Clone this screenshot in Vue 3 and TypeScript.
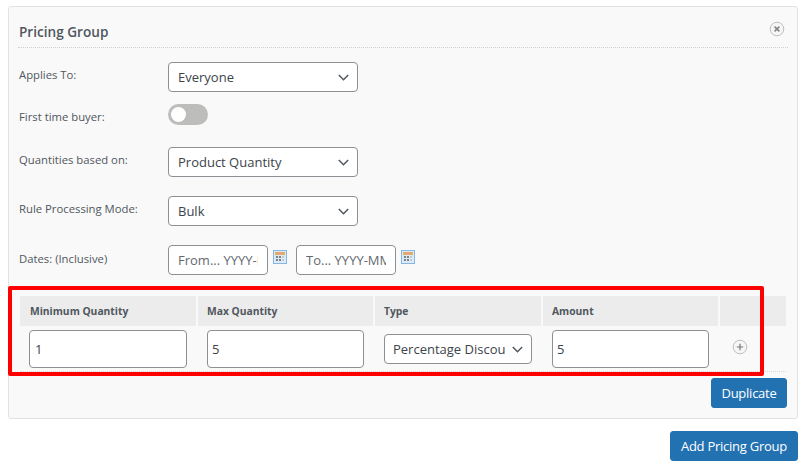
<script setup lang="ts">
const columns = ['Minimum Quantity', 'Max Quantity', 'Type', 'Amount', '']
</script>

<template>
  <div class="page">
    <section class="panel">
      <header class="panel-head">
        <h2>Pricing Group</h2>
        <svg class="round-icon" width="16" height="16" viewBox="0 0 16 16">
          <circle cx="8" cy="8" r="6.8" fill="#f6f6f6" stroke="#bdbdbd" />
          <path d="M5.6 5.6l4.8 4.8M10.4 5.6l-4.8 4.8" stroke="#858585" stroke-width="1.6" fill="none" />
        </svg>
      </header>

      <div class="row r-applies">
        <label>Applies To:</label>
        <select class="field"><option>Everyone</option></select>
      </div>
      <div class="row r-first">
        <label>First time buyer:</label>
        <span class="toggle"><i></i></span>
      </div>
      <div class="row r-qty">
        <label>Quantities based on:</label>
        <select class="field"><option>Product Quantity</option></select>
      </div>
      <div class="row r-mode">
        <label>Rule Processing Mode:</label>
        <select class="field"><option>Bulk</option></select>
      </div>
      <div class="row r-dates">
        <label>Dates: (Inclusive)</label>
        <input class="date" placeholder="From... YYYY-MM-DD" />
        <svg class="cal" width="14" height="14" viewBox="0 0 14 14">
          <rect x=".5" y=".5" width="13" height="13" fill="#dcebf8" stroke="#86b8e4" />
          <rect x="2" y="2" width="10" height="3" fill="#e6ab6c" />
          <path d="M3 6h2v2H3zM6 6h2v2H6zM3 9h2v2H3zM6 9h2v2H6z" fill="#808080" />
          <path d="M9 6h2v2H9zM9 9h2v2H9z" fill="#c3ccd4" />
        </svg>
        <input class="date second" placeholder="To... YYYY-MM-DD" />
        <svg class="cal" width="14" height="14" viewBox="0 0 14 14">
          <rect x=".5" y=".5" width="13" height="13" fill="#dcebf8" stroke="#86b8e4" />
          <rect x="2" y="2" width="10" height="3" fill="#e6ab6c" />
          <path d="M3 6h2v2H3zM6 6h2v2H6zM3 9h2v2H3zM6 9h2v2H6z" fill="#808080" />
          <path d="M9 6h2v2H9zM9 9h2v2H9z" fill="#c3ccd4" />
        </svg>
      </div>

      <div class="rules">
        <div class="heads">
          <div v-for="c in columns" :key="c" class="head">{{ c }}</div>
        </div>
        <div class="cells">
          <div class="cell"><input class="num" value="1" /></div>
          <div class="cell"><input class="num" value="5" /></div>
          <div class="cell"><select class="type"><option>Percentage Discount</option></select></div>
          <div class="cell"><input class="num" value="5" /></div>
          <div class="cell add">
            <svg class="round-icon" width="16" height="16" viewBox="0 0 16 16">
              <circle cx="8" cy="8" r="6.8" fill="#f6f6f6" stroke="#bdbdbd" />
              <path d="M4.8 8h6.4M8 4.8v6.4" stroke="#777" stroke-width="1.2" fill="none" />
            </svg>
          </div>
        </div>
        <div class="highlight"></div>
      </div>

      <div class="panel-foot"><button class="btn dup">Duplicate</button></div>
    </section>
    <div class="page-foot"><button class="btn add-group">Add Pricing Group</button></div>
  </div>
</template>

<style scoped>
.page {
  box-sizing: border-box;
  width: 801px;
  height: 464px;
  padding: 6px 3px 0 8px;
  overflow: hidden;
  font-family: "Open Sans", sans-serif;
  color: #50575e;
}
.panel {
  box-sizing: border-box;
  height: 413px;
  border: 1px solid #e2e2e2;
  border-radius: 3px;
  background: #f9f9f9;
  padding: 0 9px 0 9px;
}
.panel-head {
  height: 40px;
  display: flex;
  align-items: flex-start;
  justify-content: space-between;
  border-bottom: 1px dotted #d0d0d0;
}
h2 {
  margin: 15px 0 0 1px;
  font-size: 13.6px;
  line-height: 20px;
  font-weight: 600;
  color: #50575e;
}
.panel-head .round-icon { margin: 14px 3px 0 0; }
.row {
  display: flex;
  align-items: flex-start;
}
.row label {
  width: 149px;
  margin-left: 1px;
  font-size: 11.3px;
  line-height: 16px;
  color: #50575e;
}
.r-applies { margin-top: 14px; }
.r-applies label { margin-top: 5px; }
.r-first { margin-top: 12px; }
.r-first label { margin-top: 5px; }
.r-qty { margin-top: 22px; }
.r-qty label { margin-top: 5px; }
.r-mode { margin-top: 19px; }
.r-mode label { margin-top: 5px; }
.r-dates { margin-top: 19px; }
.r-dates label { margin-top: 6px; }
.field, .type {
  appearance: none;
  box-sizing: border-box;
  height: 30px;
  margin: 0;
  border: 1px solid #8c8f94;
  border-radius: 4px;
  background-color: #fff;
  background-image: url("data:image/svg+xml,%3Csvg xmlns='http://www.w3.org/2000/svg' width='11' height='7' viewBox='0 0 11 7'%3E%3Cpath d='M.8 1l4.7 4.7L10.2 1' fill='none' stroke='%2350575e' stroke-width='1.5'/%3E%3C/svg%3E");
  background-repeat: no-repeat;
  font-family: inherit;
  font-size: 13px;
  color: #3c434a;
}
.field {
  width: 190px;
  padding: 0 24px 0 9px;
  background-position: right 8px center;
}
.toggle {
  display: block;
  position: relative;
  width: 40px;
  height: 21px;
  border-radius: 11px;
  background: #bdbdbb;
}
.toggle i {
  position: absolute;
  left: 3px;
  top: 3px;
  width: 15px;
  height: 15px;
  border-radius: 50%;
  background: #fff;
}
.date {
  box-sizing: border-box;
  width: 100px;
  height: 30px;
  margin: 0;
  padding: 0 9px;
  border: 1px solid #8c8f94;
  border-radius: 4px;
  background: #fff;
  font-family: inherit;
  font-size: 13px;
}
.date::placeholder { color: #646970; opacity: 1; }
.date.second { margin-left: 9px; }
.cal { margin: 5px 0 0 5px; flex: none; }
.rules {
  position: relative;
  margin-top: 21px;
  margin-left: 2px;
  width: 766px;
  height: 75px;
  border-bottom: 1px dotted #d8d8d8;
}
.heads, .cells {
  display: grid;
  grid-template-columns: 176px 175px 166px 175px 66px;
  column-gap: 2px;
}
.head {
  height: 30px;
  box-sizing: border-box;
  padding-left: 10px;
  background: #ececec;
  font-size: 10.3px;
  line-height: 30px;
  font-weight: 700;
  color: #50575e;
}
.head:nth-child(2), .head:nth-child(3), .head:nth-child(4) { padding-left: 9px; }
.cells { margin-top: 4px; }
.cell { padding-left: 9px; }
.num {
  display: block;
  box-sizing: border-box;
  width: 157px;
  height: 38px;
  margin: 0;
  padding: 0 4px;
  border: 1px solid #8c8f94;
  border-radius: 4px;
  background: #fff;
  font-family: inherit;
  font-size: 13px;
  color: #3c434a;
}
.cell:first-child .num { width: 158px; padding-left: 5px; }
.type {
  display: block;
  width: 148px;
  margin-top: 4px;
  padding: 0 25px 0 8px;
  background-position: right 8px center;
}
.add { padding: 9px 0 0 12px; }
.add .round-icon { display: block; }
.highlight {
  position: absolute;
  left: -12px;
  top: -10px;
  width: 756px;
  height: 90px;
  box-sizing: border-box;
  border: 4px solid #ff0000;
  border-radius: 2px;
  pointer-events: none;
}
.panel-foot {
  display: flex;
  justify-content: flex-end;
  margin-top: 6px;
  padding-right: 1px;
}
.btn {
  box-sizing: border-box;
  height: 30px;
  padding: 0;
  border: 1px solid #2271b1;
  border-radius: 3px;
  background: #2271b1;
  color: #fff;
  font-family: inherit;
  font-size: 13px;
  letter-spacing: -0.25px;
  white-space: nowrap;
}
.dup { width: 76px; }
.add-group { width: 128px; }
.page-foot {
  display: flex;
  justify-content: flex-end;
  margin-top: 12px;
}
</style>

<style>
html, body { margin: 0; background: #fff; }
</style>
